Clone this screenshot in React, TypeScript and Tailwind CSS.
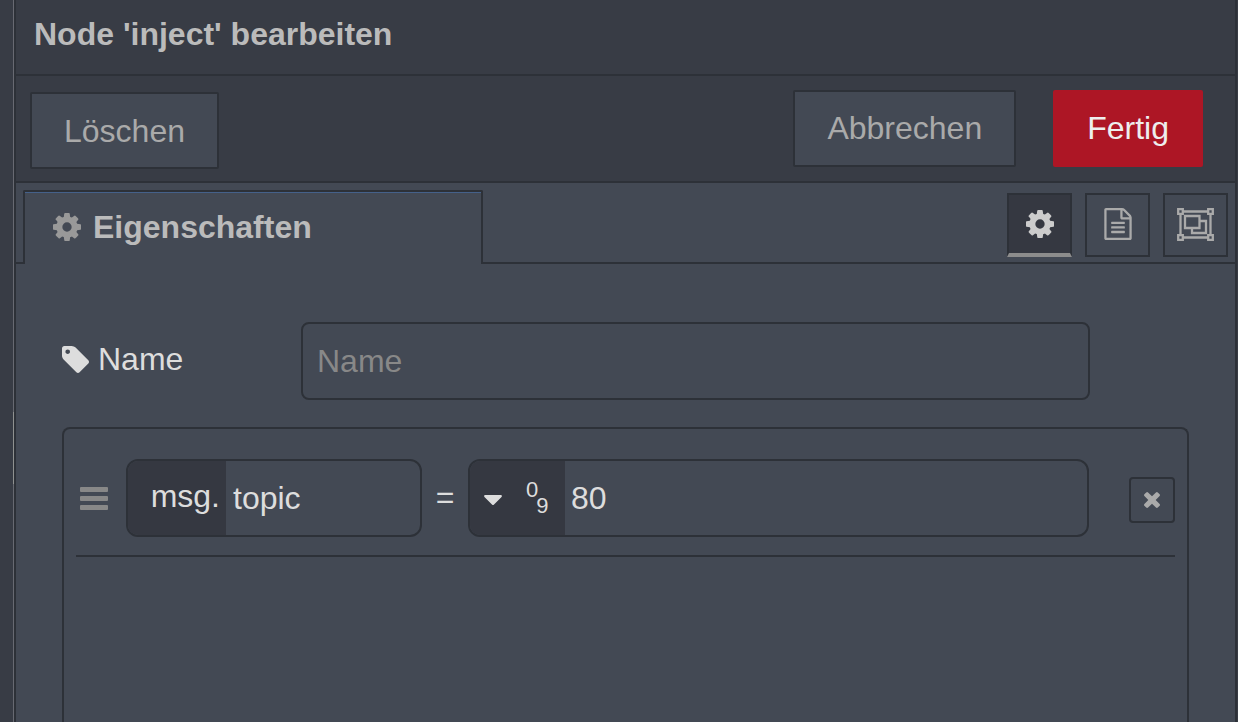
import { type ReactNode } from 'react';

interface IconProps {
    className?: string;
}

function CogIcon({ className }: IconProps) {
    return (
        <svg viewBox="128 128 1536 1536" fill="currentColor" className={className} aria-hidden="true">
            <path d="M1152 896q0-106-75-181t-181-75-181 75-75 181 75 181 181 75 181-75 75-181zm512-109v222q0 12-8 23t-20 13l-185 28q-19 54-39 91 35 50 107 138 10 12 10 25t-9 23q-27 37-99 108t-94 71q-12 0-26-9l-138-108q-44 23-91 38-16 136-29 186-7 28-36 28h-222q-14 0-24.5-8.5t-11.5-21.5l-28-184q-49-16-90-37l-141 107q-10 9-25 9-14 0-25-11-126-114-165-168-7-10-7-23 0-12 8-23 15-21 51-66.5t54-70.5q-27-50-41-99l-183-27q-13-2-21-12.5t-8-23.5v-222q0-12 8-23t19-13l186-28q14-46 39-92-40-57-107-138-10-12-10-24 0-10 9-23 26-36 98.5-107.5t94.5-71.5q13 0 26 10l138 107q44-23 91-38 16-136 29-186 7-28 36-28h222q14 0 24.5 8.5t11.5 21.5l28 184q49 16 90 37l142-107q9-9 24-9 13 0 25 10 129 119 165 170 7 8 7 22 0 12-8 23-15 21-51 66.5t-54 70.5q26 50 41 98l183 28q13 2 21 12.5t8 23.5z" />
        </svg>
    );
}

function FileIcon({ className }: IconProps) {
    return (
        <svg viewBox="128 0 1536 1792" fill="currentColor" className={className} aria-hidden="true">
            <path d="M1596 380q28 28 48 76t20 88v1152q0 40-28 68t-68 28h-1344q-40 0-68-28t-28-68v-1600q0-40 28-68t68-28h896q40 0 88 20t76 48zm-444-244v376h376q-10-29-22-41l-313-313q-12-12-41-22zm384 1528v-1024h-416q-40 0-68-28t-28-68v-416h-768v1536h1280zm-1024-864q0-14 9-23t23-9h704q14 0 23 9t9 23v64q0 14-9 23t-23 9h-704q-14 0-23-9t-9-23v-64zm736 224q14 0 23 9t9 23v64q0 14-9 23t-23 9h-704q-14 0-23-9t-9-23v-64q0-14 9-23t23-9h704zm0 256q14 0 23 9t9 23v64q0 14-9 23t-23 9h-704q-14 0-23-9t-9-23v-64q0-14 9-23t23-9h704z" />
        </svg>
    );
}

function ObjectGroupIcon({ className }: IconProps) {
    return (
        <svg viewBox="0 0 37 33" fill="none" stroke="currentColor" strokeWidth="2.3" className={className} aria-hidden="true">
            <path d="M1.2 1.2h4.6v4.6H1.2zM31.2 1.2h4.6v4.6h-4.6zM1.2 27.2h4.6v4.6H1.2zM31.2 27.2h4.6v4.6h-4.6z" />
            <path d="M6 3.5h25M6 29.5h25M3.5 6v21M33.5 6v21" />
            <path d="M8 8h14.5v12H8zM22.5 13H29v12H15v-5" />
        </svg>
    );
}

function TagIcon({ className }: IconProps) {
    return (
        <svg viewBox="128 128 1515 1515" fill="currentColor" className={className} aria-hidden="true">
            <path d="M576 448q0-53-37.5-90.5t-90.5-37.5-90.5 37.5-37.5 90.5 37.5 90.5 90.5 37.5 90.5-37.5 37.5-90.5zm1067 576q0 53-37 90l-491 492q-39 37-91 37-53 0-90-37l-715-716q-38-37-64.5-101t-26.5-117v-416q0-52 38-90t90-38h416q53 0 117 26.5t102 64.5l715 714q37 39 37 91z" />
        </svg>
    );
}

function BarsIcon({ className }: IconProps) {
    return (
        <svg viewBox="0 0 28 23" fill="currentColor" className={className} aria-hidden="true">
            <rect width="28" height="5" rx="1" />
            <rect y="9" width="28" height="5" rx="1" />
            <rect y="18" width="28" height="5" rx="1" />
        </svg>
    );
}

function CaretIcon({ className }: IconProps) {
    return (
        <svg viewBox="384 640 1024 576" fill="currentColor" className={className} aria-hidden="true">
            <path d="M1408 704q0 26-19 45l-448 448q-19 19-45 19t-45-19l-448-448q-19-19-19-45t19-45 45-19h896q26 0 45 19t19 45z" />
        </svg>
    );
}

function TimesIcon({ className }: IconProps) {
    return (
        <svg viewBox="302 366 1188 1188" fill="currentColor" className={className} aria-hidden="true">
            <path d="M1490 1322q0 40-28 68l-136 136q-28 28-68 28t-68-28l-294-294-294 294q-28 28-68 28t-68-28l-136-136q-28-28-28-68t28-68l294-294-294-294q-28-28-28-68t28-68l136-136q28-28 68-28t68 28l294 294 294-294q28-28 68-28t68 28l136 136q28 28 28 68t-28 68l-294 294 294 294q28 28 28 68z" />
        </svg>
    );
}

interface TabButtonProps {
    label: string;
    active?: boolean;
    children: ReactNode;
}

function TabButton({ label, active = false, children }: TabButtonProps) {
    return (
        <button
            type="button"
            aria-label={label}
            aria-pressed={active}
            className={
                active
                    ? 'flex h-16 w-[65px] items-center justify-center border-2 border-b-4 border-[#2d3138] border-b-[#8c8c8c] bg-[#353841] text-[#ccc]'
                    : 'flex h-16 w-[65px] items-center justify-center border-2 border-[#2d3138] pb-[2px] text-[#aaa]'
            }
        >
            {children}
        </button>
    );
}

function Separator() {
    return (
        <div className="flex shrink-0 bg-[#383c45]">
            <div className="w-[13px]" />
            <div className="flex w-px flex-col bg-[#686a72]">
                <div className="mt-[412px] h-[72px] bg-[#8f9190]" />
            </div>
        </div>
    );
}

export default function App() {
    return (
        <div className="flex min-h-screen bg-[#383c45] pr-px font-['Liberation_Sans',Arial,sans-serif] text-[32px] leading-10 text-[#ddd]">
            <Separator />

            <div className="flex min-w-0 flex-1 flex-col border-x-2 border-[#2d3138] bg-[#434954]">
                {/* Title */}
                <header className="border-b-2 border-[#2d3138] bg-[#383c45] px-[18px] pt-[14px] pb-5">
                    <h1 className="font-bold text-[#bbb]">Node 'inject' bearbeiten</h1>
                </header>

                {/* Actions */}
                <div className="flex items-start border-b-2 border-[#2d3138] bg-[#383c45] pt-[14px] pr-8 pb-3 pl-[14px] text-[#aaa]">
                    <button type="button" className="mt-[2px] h-[77px] rounded-xs border-2 border-[#2d3138] bg-[#434954] px-8">
                        Löschen
                    </button>
                    <button type="button" className="ml-auto h-[77px] rounded-xs border-2 border-[#2d3138] bg-[#434954] px-8 pb-[2px]">
                        Abbrechen
                    </button>
                    <button type="button" className="ml-[37px] h-[77px] rounded-xs bg-[#ad1625] px-[34px] pb-[2px] text-[#eee]">
                        Fertig
                    </button>
                </div>

                {/* Tabs */}
                <div className="flex h-[81px] items-end">
                    <div className="w-[7px] self-stretch border-b-2 border-[#2d3138]" />
                    <div className="h-[74px] w-[460px] rounded-t-xs border-2 border-b-0 border-[#2d3138]">
                        <button
                            type="button"
                            className="flex h-full w-full items-center gap-3 border-t border-[#45618a] pb-1 pl-7 font-bold text-[#bbb]"
                        >
                            <CogIcon className="size-7 text-[#999]" />
                            Eigenschaften
                        </button>
                    </div>
                    <div className="flex flex-1 items-start justify-end gap-[13px] self-stretch border-b-2 border-[#2d3138] pt-[10px] pr-[7px]">
                        <TabButton label="Eigenschaften" active>
                            <CogIcon className="size-7" />
                        </TabButton>
                        <TabButton label="Beschreibung">
                            <FileIcon className="h-8 w-7" />
                        </TabButton>
                        <TabButton label="Darstellung">
                            <ObjectGroupIcon className="h-[33px] w-[37px]" />
                        </TabButton>
                    </div>
                </div>

                {/* Form */}
                <form className="flex flex-1 flex-col px-[46px] pt-[58px]">
                    <div className="flex">
                        <label htmlFor="node-name" className="flex w-[239px] shrink-0 items-center gap-[9px] pb-1">
                            <TagIcon className="size-[27px]" />
                            Name
                        </label>
                        <input
                            id="node-name"
                            type="text"
                            placeholder="Name"
                            className="mr-[99px] h-[78px] min-w-0 flex-1 rounded-lg border-2 border-[#2d3138] px-[14px] placeholder:text-[#888]"
                        />
                    </div>

                    <ol className="mt-[27px] flex-1 rounded-t-lg border-2 border-b-0 border-[#2d3138] px-3">
                        <li className="flex items-center border-b-2 border-[#2d3138] pt-[30px] pb-[18px]">
                            <BarsIcon className="mr-[18px] ml-1 h-[23px] w-7 shrink-0 text-[#888]" />
                            <div className="flex h-[78px] w-[296px] shrink-0 overflow-hidden rounded-xl border-2 border-[#2d3138]">
                                <button type="button" className="w-[98px] shrink-0 bg-[#353841] pr-[6px] pb-1 text-right">
                                    msg.
                                </button>
                                <input type="text" aria-label="Eigenschaft" defaultValue="topic" className="min-w-0 flex-1 px-[7px]" />
                            </div>
                            <span className="w-[46px] shrink-0 pb-[2px] text-center">=</span>
                            <div className="flex h-[78px] min-w-0 flex-1 overflow-hidden rounded-xl border-2 border-[#2d3138]">
                                <button type="button" aria-label="Zahl" className="flex w-[95px] shrink-0 items-center bg-[#353841] pl-[14px]">
                                    <CaretIcon className="mt-[3px] h-[10px] w-[18px]" />
                                    <span className="ml-6 flex text-[22px] leading-4">
                                        <span className="pb-4">0</span>
                                        <span className="-ml-[2px] pt-4">9</span>
                                    </span>
                                </button>
                                <input type="text" aria-label="Wert" defaultValue="80" className="min-w-0 flex-1 px-[6px]" />
                            </div>
                            <button
                                type="button"
                                aria-label="Entfernen"
                                className="mt-1 ml-10 flex size-[46px] shrink-0 items-center justify-center rounded-sm border-2 border-[#2d3138] text-[#aaa]"
                            >
                                <TimesIcon className="size-4" />
                            </button>
                        </li>
                    </ol>
                </form>
            </div>
        </div>
    );
}
